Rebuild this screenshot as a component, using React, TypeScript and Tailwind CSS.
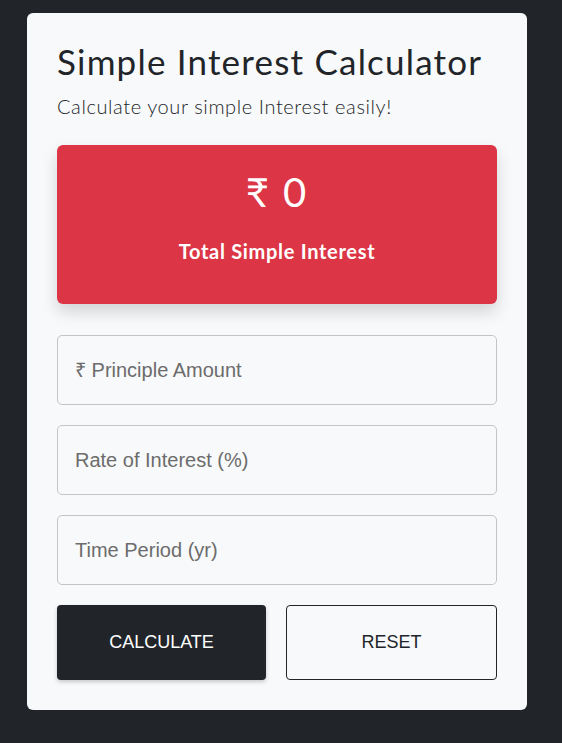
import { useState } from 'react';

export default function App() {
  const [principal, setPrincipal] = useState('');
  const [rate, setRate] = useState('');
  const [time, setTime] = useState('');
  const [interest, setInterest] = useState(0);

  const calculate = () => {
    const p = parseFloat(principal) || 0;
    const r = parseFloat(rate) || 0;
    const t = parseFloat(time) || 0;
    setInterest((p * r * t) / 100);
  };

  const reset = () => {
    setPrincipal('');
    setRate('');
    setTime('');
    setInterest(0);
  };

  const inputClass =
    "w-full h-[70px] rounded-[5px] border border-[#c4c4c4] bg-[#f8f9fa] px-[17px] text-[20px] text-[#212529] placeholder:text-[#6c6c6c] outline-none font-['Liberation_Sans',Arial,sans-serif]";

  return (
    <div className="min-h-screen bg-[#212529] pt-[13px] pb-[33px]">
      <div className="ml-[27px] w-[500px] rounded-[6px] bg-[#f8f9fa] p-[30px] font-['Lato',sans-serif] text-[#212529]">
        <h1 className="text-[35px] leading-[42px] -mt-[3px] tracking-[1.2px]">Simple Interest Calculator</h1>
        <p className="mt-[12px] text-[20px] leading-[24px] font-light tracking-[0.6px]">Calculate your simple Interest easily!</p>

        <div className="mt-[27px] flex h-[159px] flex-col items-center rounded-[6px] bg-[#dc3545] pt-[23px] text-white shadow-[0_8px_16px_rgba(0,0,0,0.15)]">
          <div className="text-[40px] leading-[48px] tracking-[2px]">₹ {interest}</div>
          <div className="mt-[23px] text-[20px] leading-[24px] font-bold tracking-[0.7px]">Total Simple Interest</div>
        </div>

        <div className="mt-[31px] flex flex-col gap-[20px]">
          <input
            className={inputClass}
            placeholder="₹ Principle Amount"
            value={principal}
            onChange={(e) => setPrincipal(e.target.value)}
          />
          <input
            className={inputClass}
            placeholder="Rate of Interest (%)"
            value={rate}
            onChange={(e) => setRate(e.target.value)}
          />
          <input
            className={inputClass}
            placeholder="Time Period (yr)"
            value={time}
            onChange={(e) => setTime(e.target.value)}
          />
        </div>

        <div className="mt-[20px] flex gap-[20px] font-['Liberation_Sans',Arial,sans-serif]">
          <button
            onClick={calculate}
            className="h-[75px] flex-1 rounded-[4px] bg-[#212529] text-[18px] text-white shadow-[0_2px_4px_rgba(0,0,0,0.2)]"
          >
            CALCULATE
          </button>
          <button
            onClick={reset}
            className="h-[75px] flex-1 rounded-[4px] border border-[#212529] text-[18px] text-[#212529]"
          >
            RESET
          </button>
        </div>
      </div>
    </div>
  );
}
